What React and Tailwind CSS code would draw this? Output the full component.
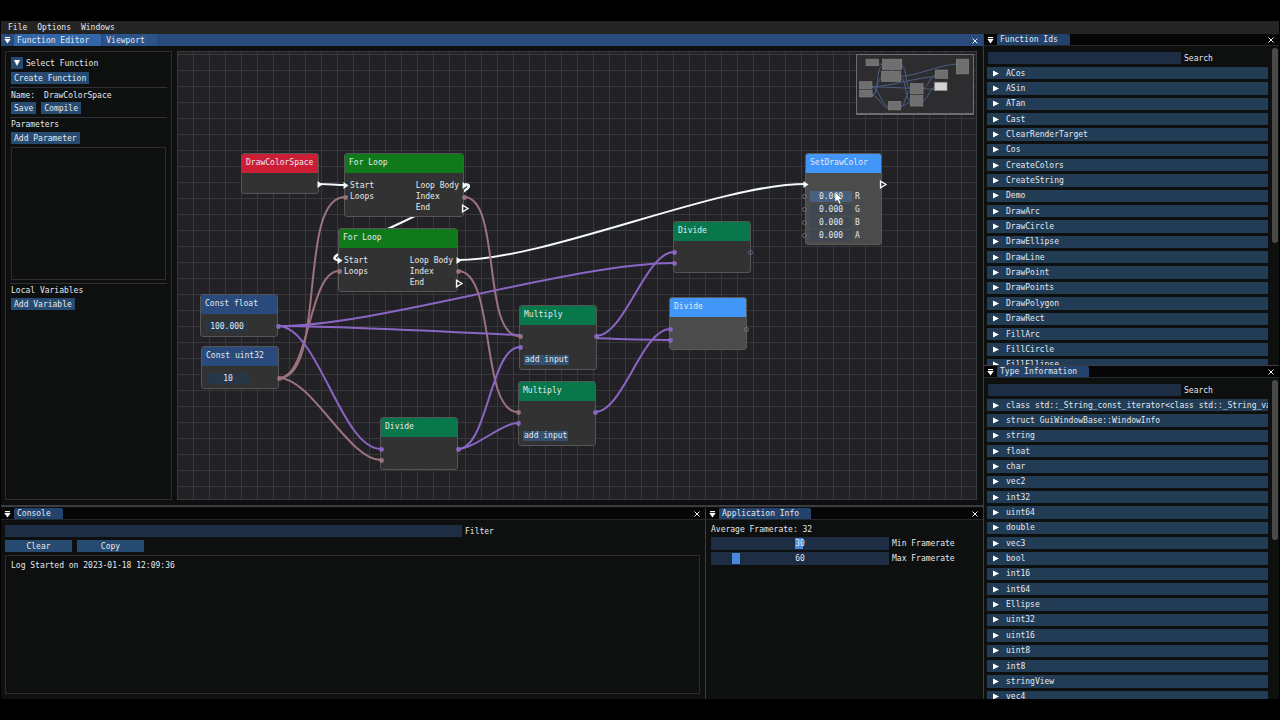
import React, { useState } from 'react';

const functionIds = [
  'ACos', 'ASin', 'ATan', 'Cast', 'ClearRenderTarget', 'Cos', 'CreateColors', 'CreateString', 'Demo', 'DrawArc',
  'DrawCircle', 'DrawEllipse', 'DrawLine', 'DrawPoint', 'DrawPoints', 'DrawPolygon', 'DrawRect', 'FillArc',
  'FillCircle', 'FillEllipse',
];

const typeNames = [
  'class std::_String_const_iterator<class std::_String_val<struct std::_Simple_types<char>>>',
  'struct GuiWindowBase::WindowInfo',
  'string', 'float', 'char', 'vec2', 'int32', 'uint64', 'double', 'vec3', 'bool', 'int16', 'int64', 'Ellipse',
  'uint32', 'uint16', 'uint8', 'int8', 'stringView', 'vec4',
];

// Positions are in canvas space
const nodes = [
  { id: 'entry', title: 'DrawColorSpace', kind: 'entry', x: 63, y: 101, w: 78, h: 41 },
  { id: 'loop1', title: 'For Loop', kind: 'loop', x: 166, y: 101, w: 120, h: 64 },
  { id: 'loop2', title: 'For Loop', kind: 'loop', x: 160, y: 176, w: 120, h: 64 },
  { id: 'float', title: 'Const float', kind: 'const', value: '100.000', x: 22, y: 242, w: 78, h: 43 },
  { id: 'uint', title: 'Const uint32', kind: 'const', value: '10', x: 23, y: 294, w: 78, h: 43 },
  { id: 'div1', title: 'Divide', kind: 'math', x: 202, y: 365, w: 78, h: 53 },
  { id: 'mul1', title: 'Multiply', kind: 'multi', x: 341, y: 253, w: 78, h: 65 },
  { id: 'mul2', title: 'Multiply', kind: 'multi', x: 340, y: 329, w: 78, h: 65 },
  { id: 'div2', title: 'Divide', kind: 'math', x: 495, y: 169, w: 78, h: 52 },
  { id: 'div3', title: 'Divide', kind: 'math', selected: true, x: 491, y: 245, w: 78, h: 53 },
  { id: 'color', title: 'SetDrawColor', kind: 'color', selected: true, x: 627, y: 101, w: 77, h: 92 },
];

const WHITE = '#f4fbfb';
const PINK = '#9c727c';
const PURPLE = '#8a66c4';

const links = [
  { from: [141, 132], to: [167, 133], color: WHITE },
  { from: [286, 133], to: [161, 208], color: WHITE },
  { from: [280, 208], to: [628, 132], color: WHITE },
  { from: [101, 326], to: [167, 145], color: PINK },
  { from: [101, 326], to: [161, 219], color: PINK },
  { from: [101, 326], to: [203, 408], color: PINK },
  { from: [286, 145], to: [341, 284], color: PINK },
  { from: [280, 219], to: [340, 360], color: PINK },
  { from: [100, 274], to: [496, 211], color: PURPLE },
  { from: [100, 274], to: [492, 288], color: PURPLE },
  { from: [100, 274], to: [203, 397], color: PURPLE },
  { from: [280, 397], to: [342, 295], color: PURPLE },
  { from: [280, 397], to: [340, 371], color: PURPLE },
  { from: [418, 284], to: [496, 200], color: PURPLE },
  { from: [417, 360], to: [492, 277], color: PURPLE },
];

const pins = [
  { x: 167, y: 145, color: PINK }, { x: 161, y: 219, color: PINK },
  { x: 286, y: 145, color: PINK }, { x: 280, y: 219, color: PINK },
  { x: 101, y: 326, color: PINK }, { x: 203, y: 408, color: PINK },
  { x: 342, y: 284, color: PINK }, { x: 340, y: 360, color: PINK },
  { x: 100, y: 274, color: PURPLE }, { x: 203, y: 397, color: PURPLE },
  { x: 280, y: 397, color: PURPLE }, { x: 342, y: 295, color: PURPLE },
  { x: 340, y: 371, color: PURPLE }, { x: 418, y: 284, color: PURPLE },
  { x: 417, y: 360, color: PURPLE }, { x: 496, y: 200, color: PURPLE },
  { x: 496, y: 211, color: PURPLE }, { x: 492, y: 277, color: PURPLE },
  { x: 492, y: 288, color: PURPLE },
  { x: 572, y: 200, color: '#655c94', open: true }, { x: 568, y: 277, color: '#77717f', open: true },
  { x: 626, y: 144, color: '#74667a', open: true }, { x: 626, y: 157, color: '#74667a', open: true },
  { x: 626, y: 170, color: '#74667a', open: true }, { x: 626, y: 183, color: '#74667a', open: true },
];

const execPins = [
  { x: 141, y: 132 }, { x: 167, y: 133 }, { x: 286, y: 133 }, { x: 286, y: 156, open: true },
  { x: 161, y: 208 }, { x: 280, y: 208 }, { x: 280, y: 231, open: true },
  { x: 627, y: 132 }, { x: 704, y: 132, open: true },
];

const linkPath = ({ from, to }) => {
  const bend = Math.hypot(to[0] - from[0], to[1] - from[1]) * 0.25;
  return `M${from[0]} ${from[1]}C${from[0] + bend} ${from[1]} ${to[0] - bend} ${to[1]} ${to[0]} ${to[1]}`;
};

const headerClass = (node) => {
  if (node.selected) return 'bg-[#4296fa]';
  switch (node.kind) {
    case 'entry':
      return 'bg-[#cc1f36]';
    case 'loop':
      return 'bg-[#107a1a]';
    case 'const':
      return 'bg-[#294a7a]';
    default:
      return 'bg-[#08774c]';
  }
};

const Button = ({ className = '', children, ...props }) => (
  <button
    type="button"
    className={'h-3 shrink-0 bg-[#274a70] px-[3px] leading-[13px] whitespace-nowrap hover:bg-[#4296fa] ' + className}
    {...props}
  >
    {children}
  </button>
);

const CollapseIcon = () => (
  <svg className="h-[7px] w-[7px]" viewBox="0 0 7 7" fill="#ffffff">
    <path d="M1 0H6V1.2H1Z" />
    <path d="M0.3 2H6.7L3.5 6.5Z" />
  </svg>
);

const CloseIcon = () => (
  <svg className="h-[6px] w-[6px]" viewBox="0 0 6 6" stroke="#e8eef5" strokeWidth="1">
    <path d="M0.5 0.5L5.5 5.5M5.5 0.5L0.5 5.5" />
  </svg>
);

const TitleBar = ({ tabs, focused }) => (
  <div
    className={
      'flex h-3 shrink-0 items-stretch pr-[5px] pl-[3px] ' +
      (focused ? 'bg-[#294a7a]' : 'border-b border-[#22292f] bg-[#060606]')
    }
  >
    <button type="button" aria-label="Window menu" className="flex w-[10px] items-center pt-px">
      <CollapseIcon />
    </button>
    <div role="tablist" className="flex gap-[2px]">
      {tabs.map((tab, i) => (
        <button
          key={tab}
          type="button"
          role="tab"
          aria-selected={i === 0}
          className={
            'h-full rounded-t-[2px] pt-px pr-3 pl-[3px] ' +
            (!focused ? 'bg-[#23436c]' : i === 0 ? 'bg-[#3366a8]' : 'bg-[#2c528a]')
          }
        >
          {tab}
        </button>
      ))}
    </div>
    <button type="button" aria-label={'Close ' + tabs[0]} className="ml-auto flex items-center pt-px">
      <CloseIcon />
    </button>
  </div>
);

const Separator = () => <hr className="-mx-px shrink-0 border-[#303036]" />;

const FunctionPanel = () => (
  <section className="flex w-[167px] shrink-0 flex-col gap-[3px] border border-[#2b2b30] px-[5px] pt-[5px]">
    <div className="flex items-center gap-[3px]">
      <Button id="select-function" aria-label="Select Function" className="flex w-3 items-center justify-center">
        <svg className="h-[6px] w-[6px]" viewBox="0 0 6 6" fill="#ffffff">
          <path d="M0 0H6L3 6Z" />
        </svg>
      </Button>
      <label htmlFor="select-function" className="pt-px">Select Function</label>
    </div>
    <div className="flex">
      <Button>Create Function</Button>
    </div>
    <Separator />
    <div className="flex h-2 items-center gap-[9px] pt-px">
      <span>Name:</span>
      <span>DrawColorSpace</span>
    </div>
    <div className="flex gap-[5px]">
      <Button>Save</Button>
      <Button>Compile</Button>
    </div>
    <Separator />
    <h2 className="h-2">Parameters</h2>
    <div className="flex">
      <Button>Add Parameter</Button>
    </div>
    <div className="h-[133px] shrink-0 border border-[#2b2b30]" />
    <Separator />
    <h2 className="h-2">Local Variables</h2>
    <div className="flex">
      <Button>Add Variable</Button>
    </div>
  </section>
);

const NodeBody = ({ node }) => {
  if (node.kind === 'loop') {
    return (
      <div className="flex justify-between pt-[7px] pr-[4px] pl-[5px] leading-[11px]">
        <ul>
          <li>Start</li>
          <li>Loops</li>
        </ul>
        <ul>
          <li>Loop Body</li>
          <li>Index</li>
          <li>End</li>
        </ul>
      </div>
    );
  }
  if (node.kind === 'const') {
    return (
      <div className="px-[5px] pt-[7px]">
        <input
          aria-label={node.title + ' value'}
          defaultValue={node.value}
          className="block h-[11px] w-[42px] bg-[#273747] text-center outline-none"
        />
      </div>
    );
  }
  if (node.kind === 'multi') {
    return (
      <div className="px-1 pt-[30px]">
        <button type="button" className="block h-[10px] bg-[#34506e] px-px leading-[10px]">add input</button>
      </div>
    );
  }
  if (node.kind === 'color') {
    return (
      <div className="flex flex-col gap-[2px] px-[4px] pt-[18px]">
        {['R', 'G', 'B', 'A'].map((channel, i) => (
          <label key={channel} className="flex h-[11px] items-center gap-[3px]">
            <input
              defaultValue="0.000"
              className={'block h-[11px] w-[42px] text-center outline-none ' + (i === 0 ? 'bg-[#46617f]' : 'bg-[#3e4853]')}
            />
            {channel}
          </label>
        ))}
      </div>
    );
  }
  return null;
};

const Node = ({ node }) => (
  <div
    className={
      'absolute overflow-hidden rounded-[3px] border ' +
      (node.selected ? 'border-[#5a5a5a] bg-[#4b4b4b]' : 'border-[#555555] bg-[#323232]')
    }
    style={{ left: node.x, top: node.y, width: node.w, height: node.h }}
  >
    <h3 className={'h-[19px] px-1 leading-[18px] whitespace-nowrap ' + headerClass(node)}>{node.title}</h3>
    <NodeBody node={node} />
  </div>
);

const MiniMap = () => (
  <div className="absolute top-[2px] right-[2px] h-[61px] w-[118px] border border-b-2 border-[#6e6e70] bg-[#2d2d2f]">
    <svg className="h-full w-full" aria-hidden="true">
      <g transform="translate(-1 -12) scale(0.16)">
        {links.map((link, i) => (
          <path key={i} d={linkPath(link)} fill="none" stroke="#4a6288" strokeWidth="6" />
        ))}
        {nodes.map((node) => (
          <rect
            key={node.id}
            x={node.x}
            y={node.y}
            width={node.w}
            height={node.h}
            fill={node.id === 'div3' ? '#d4d4d4' : '#6f6f6f'}
            stroke="#858585"
            strokeWidth="4"
          />
        ))}
      </g>
    </svg>
  </div>
);

const NodeCanvas = () => (
  <section className="relative min-w-0 flex-1 overflow-hidden border border-[#3a3a3e] bg-[#222226] bg-[linear-gradient(to_right,#38383b_1px,transparent_1px),linear-gradient(to_bottom,#38383b_1px,transparent_1px)] bg-[size:16px_16px] bg-[position:15px_2px]">
    <svg className="absolute inset-0 h-full w-full" aria-hidden="true">
      {links.map((link, i) => (
        <path key={i} d={linkPath(link)} fill="none" stroke={link.color} strokeWidth="2" />
      ))}
    </svg>
    {nodes.map((node) => (
      <Node key={node.id} node={node} />
    ))}
    <svg className="pointer-events-none absolute inset-0 h-full w-full" aria-hidden="true">
      {/* the loop link curls around its own pins */}
      <path d="M287 132C293 132 292 136 287 138" fill="none" stroke={WHITE} strokeWidth="2" />
      <path d="M160 202C155 205 155 208 161 208" fill="none" stroke={WHITE} strokeWidth="2" />
      {pins.map((pin, i) => (
        <circle
          key={i}
          cx={pin.x + 0.5}
          cy={pin.y + 0.5}
          r={pin.open ? 2 : 2.4}
          fill={pin.open ? 'none' : pin.color}
          stroke={pin.open ? pin.color : 'none'}
        />
      ))}
      {execPins.map((pin, i) => (
        <path
          key={i}
          d={pin.open ? 'M-1.5 -2.8V3.8L4 0.5Z' : 'M-1.5 -3V4L3.5 0.5Z'}
          transform={`translate(${pin.x} ${pin.y})`}
          fill={pin.open ? 'none' : WHITE}
          stroke={pin.open ? WHITE : 'none'}
          strokeWidth="1.3"
        />
      ))}
      <path d="M657 140V150L659.4 148L661.2 152L663 151.2L661.2 147.4H664.4Z" fill="#ffffff" stroke="#222222" strokeWidth="0.4" />
    </svg>
    <MiniMap />
  </section>
);

const SearchList = ({ title, items, listClass, thumbClass }) => {
  const [query, setQuery] = useState('');
  const shown = items.filter((item) => item.toLowerCase().includes(query.toLowerCase()));

  return (
    <>
      <TitleBar tabs={[title]} />
      <div className="flex min-h-0 flex-1 overflow-hidden pt-[2px] pr-px">
        <div className="min-w-0 flex-1 pt-[4px] pr-1 pl-[3px]">
          <label className="flex items-center gap-[3px]">
            <input
              value={query}
              onChange={(e) => setQuery(e.target.value)}
              className="ml-px h-3 w-[193px] bg-[#1d2d43] px-[3px] outline-none"
            />
            <span className="pt-px">Search</span>
          </label>
          <div className={'mt-[3px] flex flex-col gap-[3px] ' + listClass}>
            {shown.map((item) => (
              <button
                key={item}
                type="button"
                className="flex min-h-0 flex-1 items-center gap-[7px] overflow-hidden bg-[#223c56] pl-[6px] text-left whitespace-nowrap hover:bg-[#2f5a8a]"
              >
                <svg className="h-[7px] w-[6px] shrink-0" viewBox="0 0 6 7" fill="#ffffff">
                  <path d="M0 0.5L6 3.5L0 6.5Z" />
                </svg>
                <span className="pt-px">{item}</span>
              </button>
            ))}
          </div>
        </div>
        <div className="w-[6px] shrink-0">
          <div className={'rounded-[3px] bg-[#4a4a4a] ' + thumbClass} />
        </div>
      </div>
    </>
  );
};

const ConsolePanel = () => (
  <section className="flex min-w-0 flex-1 flex-col">
    <TitleBar tabs={['Console']} />
    <div className="flex flex-1 flex-col gap-[3px] p-[5px] pl-1">
      <label className="flex items-center gap-[3px]">
        <input className="h-3 w-[457px] bg-[#1d2d43] px-[3px] outline-none" />
        <span className="pt-px">Filter</span>
      </label>
      <div className="flex gap-[5px]">
        <Button className="w-[67px]">Clear</Button>
        <Button className="w-[67px]">Copy</Button>
      </div>
      <div className="flex-1 border border-[#2b2b30] px-[5px] py-[5px] leading-[10px]">Log Started on 2023-01-18 12:09:36</div>
    </div>
  </section>
);

const FramerateSlider = ({ label, min, max, initial }) => {
  const [value, setValue] = useState(initial);
  return (
    <label className="flex items-center gap-[3px]">
      <span className="relative flex h-[13px] w-[178px]">
        <input
          type="range"
          min={min}
          max={max}
          value={value}
          onChange={(e) => setValue(Number(e.target.value))}
          className="h-full w-full appearance-none bg-[#1d2d43] px-px [&::-webkit-slider-thumb]:h-[11px] [&::-webkit-slider-thumb]:w-2 [&::-webkit-slider-thumb]:appearance-none [&::-webkit-slider-thumb]:bg-[#4b88dc]"
        />
        <span className="pointer-events-none absolute inset-0 text-center leading-[13px]">{value}</span>
      </span>
      {label}
    </label>
  );
};

const AppInfoPanel = () => (
  <section className="flex w-[278px] shrink-0 flex-col border-l border-[#3c3c42]">
    <TitleBar tabs={['Application Info']} />
    <div className="flex flex-col gap-[2px] px-[5px] pt-[3px]">
      <p className="h-3 leading-[14px]">Average Framerate: 32</p>
      <FramerateSlider label="Min Framerate" min={0} max={61} initial={30} />
      <FramerateSlider label="Max Framerate" min={30} max={288} initial={60} />
    </div>
  </section>
);

const App = () => (
  <div className="flex h-screen flex-col overflow-hidden bg-black px-px py-[21px] font-['DejaVu_Sans_Mono',monospace] text-[8px] leading-[8px] text-[#e4eaee]">
    <nav className="flex h-[13px] shrink-0 items-center gap-[10px] bg-[#242424] pl-[7px]">
      <button type="button">File</button>
      <button type="button">Options</button>
      <button type="button">Windows</button>
    </nav>
    <main className="flex min-h-0 flex-1 bg-[#0e0f0f]">
      <div className="flex min-w-0 flex-1 flex-col">
        <div className="flex min-h-0 flex-1 flex-col">
          <TitleBar tabs={['Function Editor', 'Viewport']} focused />
          <div className="flex min-h-0 flex-1 gap-[5px] py-[5px] pr-[6px] pl-1">
            <FunctionPanel />
            <NodeCanvas />
          </div>
        </div>
        <div className="flex h-[194px] shrink-0 border-t-2 border-[#3c3c42] pt-px">
          <ConsolePanel />
          <AppInfoPanel />
        </div>
      </div>
      <aside className="flex w-[296px] shrink-0 flex-col border-l border-[#3c3c42]">
        <section className="flex min-h-0 flex-1 flex-col overflow-hidden">
          <SearchList title="Function Ids" items={functionIds} listClass="h-[304px]" thumbClass="h-[195px]" />
        </section>
        <section className="flex h-[334px] shrink-0 flex-col overflow-hidden border-t border-[#3c3c42]">
          <SearchList title="Type Information" items={typeNames} listClass="h-[304px]" thumbClass="h-[160px]" />
        </section>
      </aside>
    </main>
  </div>
);

export default App;
